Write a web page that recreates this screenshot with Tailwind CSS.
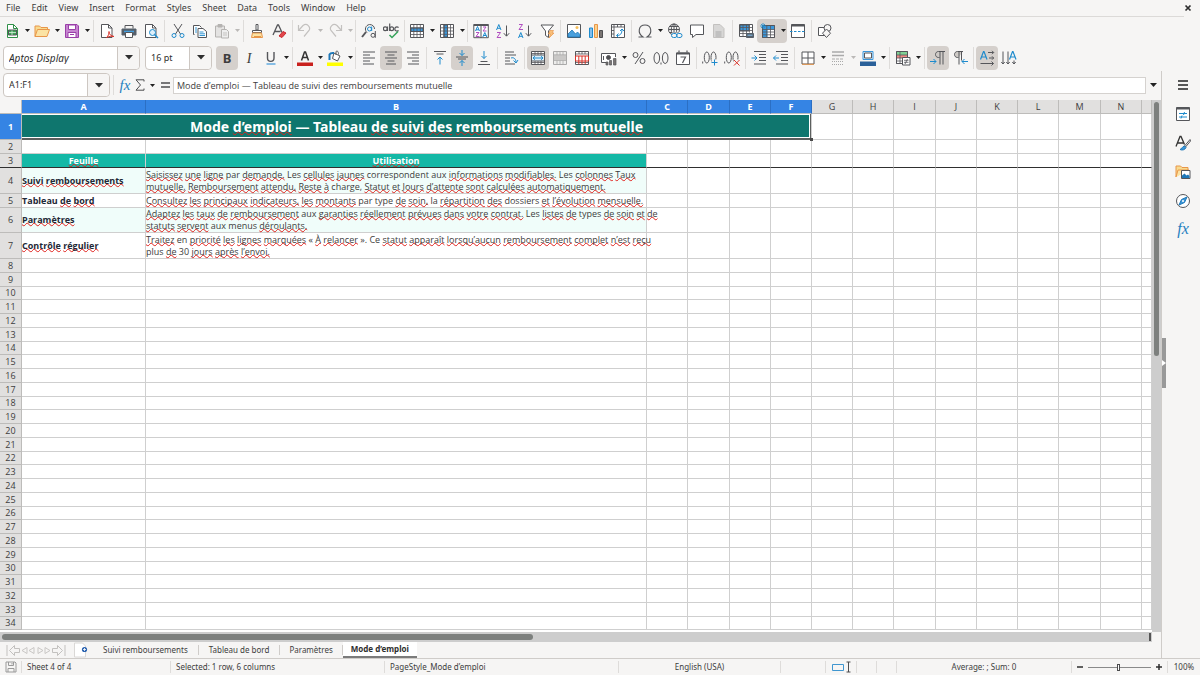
<!DOCTYPE html>
<html lang="fr">
<head>
    <meta charset="UTF-8">
    <meta name="viewport" content="width=device-width, initial-scale=1.0">
    <title>Tableau de suivi des remboursements mutuelle</title>
    <script src="https://cdn.jsdelivr.net/npm/@tailwindcss/browser@4"></script>
</head>
<body class="flex h-screen flex-col overflow-hidden bg-[#f6f5f4] font-['Noto_Sans',sans-serif] text-[9px] leading-3 text-[#3d3d3d]">

    <!-- Menu -->
    <header class="mr-4 flex h-[17px] shrink-0 items-center border-b border-[#dcdad8] pl-[6px]">
        <nav class="flex gap-[11px]">
            <a href="#">File</a>
            <a href="#">Edit</a>
            <a href="#">View</a>
            <a href="#">Insert</a>
            <a href="#">Format</a>
            <a href="#">Styles</a>
            <a href="#">Sheet</a>
            <a href="#">Data</a>
            <a href="#">Tools</a>
            <a href="#">Window</a>
            <a href="#">Help</a>
        </nav>
        <button aria-label="Close" class="-mr-2 ml-auto">
            <svg class="size-2" viewBox="0 0 8 8" fill="none" stroke="#2e2e2e" stroke-width="1.7"><path d="M1.5 1.5l5 5M6.5 1.5l-5 5"/></svg>
        </button>
    </header>

    <!-- Toolbars, filled by the script below -->
    <div id="standardBar" class="flex h-[27px] shrink-0 items-center pl-px"></div>
    <div class="flex h-[27px] shrink-0 items-center pl-[3px]">
        <div class="flex h-6 w-[137px] rounded border border-[#cdc7c2] bg-white">
            <input type="text" aria-label="Font name" value="Aptos Display" class="w-0 grow px-[5px] text-[10px] text-[#2e2e2e] italic outline-none">
            <button aria-label="Font list" class="flex w-[22px] items-center justify-center rounded-r border-l border-[#cdc7c2] bg-[#f6f5f4]">
                <svg class="h-[5px] w-2" viewBox="0 0 8 5" fill="#2e2e2e"><path d="M0 0h8L4 4.5z"/></svg>
            </button>
        </div>
        <div class="ml-[5px] flex h-6 w-[67px] rounded border border-[#cdc7c2] bg-white">
            <input type="text" aria-label="Font size" value="16 pt" class="w-0 grow px-[5px] text-[#2e2e2e] outline-none">
            <button aria-label="Size list" class="flex w-[22px] items-center justify-center rounded-r border-l border-[#cdc7c2] bg-[#f6f5f4]">
                <svg class="h-[5px] w-2" viewBox="0 0 8 5" fill="#2e2e2e"><path d="M0 0h8L4 4.5z"/></svg>
            </button>
        </div>
        <div id="formatBar" class="ml-1 flex items-center"></div>
    </div>

    <div class="flex min-h-0 grow">
        <main class="flex min-w-0 grow flex-col">
            <!-- Formula bar -->
            <div class="flex h-7 shrink-0 items-center pl-[3px]">
                <div class="flex h-6 w-[107px] rounded border border-[#cdc7c2] bg-white">
                    <input type="text" aria-label="Name box" value="A1:F1" class="w-0 grow px-[5px] text-[#2e2e2e] outline-none">
                    <button aria-label="Name list" class="flex w-[22px] items-center justify-center rounded-r border-l border-[#cdc7c2] bg-[#f6f5f4]">
                        <svg class="h-[5px] w-2" viewBox="0 0 8 5" fill="#2e2e2e"><path d="M0 0h8L4 4.5z"/></svg>
                    </button>
                </div>
                <div class="ml-[3px] flex h-5 items-center border-l border-[#dedcda] pl-1">
                    <button aria-label="Function wizard" class="w-[14px] font-['Liberation_Serif',serif] text-[15px] leading-4 text-[#1e7fc0] italic">fx</button>
                    <button aria-label="Select function" class="ml-[3px] flex items-center">
                        <svg class="h-3 w-[10px]" viewBox="0 0 10 12" fill="none" stroke="#4d4d4f"><path d="M9 2.5V.8H1L5.5 6 1 11.2h8V9.5"/></svg>
                        <svg class="ml-[5px] h-[3px] w-[5px]" viewBox="0 0 5 3" fill="#222"><path d="M0 0h5L2.5 3z"/></svg>
                    </button>
                    <button aria-label="Formula" class="ml-[6px]">
                        <svg class="h-2 w-[9px]" viewBox="0 0 9 8" stroke="#4d4d4f" stroke-width="1.5"><path d="M0 2h9M0 6h9"/></svg>
                    </button>
                </div>
                <input type="text" aria-label="Formula input" value="Mode d’emploi — Tableau de suivi des remboursements mutuelle" class="ml-[3px] h-[17px] min-w-0 grow border border-[#d5d2cf] bg-white px-[3px] font-['Open_Sans',sans-serif] outline-none">
                <button aria-label="Expand formula bar" class="flex w-[15px] justify-center">
                    <svg class="h-1 w-[7px]" viewBox="0 0 7 4" fill="#222"><path d="M0 0h7L3.5 4z"/></svg>
                </button>
            </div>

            <!-- Sheet -->
            <div class="flex min-h-0 grow pt-px">
                <div class="min-w-0 grow overflow-hidden bg-white">
                    <table class="w-full table-fixed border-separate border-spacing-0 font-['Open_Sans',sans-serif] [&_td]:border-r [&_td]:border-b [&_td]:border-[#cfcfcf] [&_td]:p-0 [&_td]:leading-[12px] [&_td]:whitespace-nowrap [&_th]:border-r [&_th]:border-b [&_th]:border-[#bdbcba] [&_th]:p-0 [&_th]:leading-[12px] [&_u]:decoration-[#e0201b] [&_u]:decoration-wavy [&_u]:decoration-1 [&_u]:[text-decoration-skip-ink:none] [&_u]:[text-underline-offset:-1px]">
                        <colgroup>
                            <col class="w-[22px]">
                            <col class="w-[124px]">
                            <col class="w-[501px]">
                            <col class="w-[41px]"><col class="w-[42px]"><col class="w-[41px]"><col class="w-[41px]">
                            <col class="w-[41px]"><col class="w-[41px]"><col class="w-[42px]"><col class="w-[41px]">
                            <col class="w-[41px]"><col class="w-[41px]"><col class="w-[42px]"><col class="w-[41px]">
                            <col>
                        </colgroup>
                        <thead>
                            <tr id="columnHeads" class="h-[14px]"></tr>
                        </thead>
                        <tbody id="sheetRows">
                            <tr class="h-[26px]">
                                <th class="bg-[#3584e4] font-bold text-white">1</th>
                                <td colspan="6" class="relative bg-[#0f766e] text-center font-['Noto_Sans',sans-serif] text-[14px] font-bold text-white">
                                    Mode <u>d’emploi</u> — Tableau <u>de</u> <u>suivi</u> <u>des</u> <u>remboursements</u> <u>mutuelle</u>
                                    <span class="absolute inset-0 -bottom-px border-r border-b-2 border-[#5c5f5e]">
                                        <span class="absolute inset-0 border border-l-0 border-white"></span>
                                    </span>
                                    <span class="absolute -right-[2px] -bottom-[2px] size-[3px] bg-[#4a4a4a]"></span>
                                </td>
                                <td></td><td></td><td></td><td></td><td></td><td></td><td></td><td></td><td></td>
                            </tr>
                            <tr class="h-[14px]" data-blank="15"></tr>
                            <tr class="h-[14px] [&>*]:border-b-[#2f2f2f]!" data-blank="13">
                                <td class="bg-[#14b8a6] text-center font-bold text-white"><u>Feuille</u></td>
                                <td class="bg-[#14b8a6] text-center font-bold text-white"><u>Utilisation</u></td>
                            </tr>
                            <tr class="h-[26px]" data-blank="13">
                                <td class="bg-[#f0fdfa] pl-px font-bold text-[#1f2937]"><u>Suivi</u> <u>remboursements</u></td>
                                <td class="bg-[#f0fdfa] pl-px"><u>Saisissez</u> <u>une</u> <u>ligne</u> par <u>demande.</u> Les <u>cellules</u> <u>jaunes</u> correspondent aux <u>informations</u> <u>modifiables.</u> Les <u>colonnes</u> <u>Taux</u><br><u>mutuelle,</u> <u>Remboursement</u> <u>attendu,</u> <u>Reste</u> <u>à</u> charge, <u>Statut</u> <u>et</u> <u>Jours</u> <u>d’attente</u> <u>sont</u> <u>calculées</u> <u>automatiquement.</u></td>
                            </tr>
                            <tr class="h-[14px]" data-blank="13">
                                <td class="pl-px font-bold text-[#1f2937]">Tableau <u>de</u> <u>bord</u></td>
                                <td class="pl-px"><u>Consultez</u> <u>les</u> <u>principaux</u> <u>indicateurs,</u> <u>les</u> <u>montants</u> par type <u>de</u> <u>soin,</u> la <u>répartition</u> <u>des</u> dossiers <u>et</u> <u>l’évolution</u> <u>mensuelle.</u></td>
                            </tr>
                            <tr class="h-[25px]" data-blank="13">
                                <td class="bg-[#f0fdfa] pl-px font-bold text-[#1f2937]"><u>Paramètres</u></td>
                                <td class="bg-[#f0fdfa] pl-px"><u>Adaptez</u> <u>les</u> <u>taux</u> <u>de</u> <u>remboursement</u> aux <u>garanties</u> <u>réellement</u> <u>prévues</u> <u>dans</u> <u>votre</u> <u>contrat.</u> Les <u>listes</u> <u>de</u> types <u>de</u> <u>soin</u> <u>et</u> <u>de</u><br><u>statuts</u> <u>servent</u> aux menus <u>déroulants.</u></td>
                            </tr>
                            <tr class="h-[26px]" data-blank="13">
                                <td class="pl-px font-bold text-[#1f2937]"><u>Contrôle</u> <u>régulier</u></td>
                                <td class="pl-px"><u>Traitez</u> en <u>priorité</u> <u>les</u> <u>lignes</u> <u>marquées</u> « <u>À</u> <u>relancer</u> ». Ce <u>statut</u> <u>apparaît</u> <u>lorsqu’aucun</u> <u>remboursement</u> <u>complet</u> <u>n’est</u> <u>reçu</u><br>plus <u>de</u> 30 <u>jours</u> <u>après</u> <u>l’envoi.</u></td>
                            </tr>
                        </tbody>
                    </table>
                </div>
                <div class="w-[9px] shrink-0 bg-[#cdcdcd] pt-[2px] pl-[2px]">
                    <div class="h-[254px] w-[5px] rounded-full bg-[#7d807e]"></div>
                </div>
            </div>
            <div class="mr-[9px] flex h-[10px] shrink-0 items-center bg-[#cdcdcd] pl-[2px]">
                <div class="h-[6px] w-[531px] rounded-full bg-[#7d807e]"></div>
                <div class="ml-auto h-2 w-[3px] border-r border-[#cdcdcd] bg-[#555]"></div>
            </div>

            <!-- Sheet tabs -->
            <div class="flex h-4 shrink-0 items-stretch pl-[6px] text-[8px]">
                <div class="flex items-center">
                    <button aria-label="First sheet"><svg class="h-[13px] w-[15px]" viewBox="0 0 15 13" fill="none" stroke="#c3c1bf"><path d="M1 1v11M3.5 6.5L8.5 1.5v3h5v4h-5v3z"/></svg></button>
                    <button aria-label="Previous sheet"><svg class="h-[13px] w-[15px]" viewBox="0 0 15 13" fill="none" stroke="#c9c7c5"><path d="M1 6.5l5-3v6zM8 6.5l5-3v6z"/></svg></button>
                    <button aria-label="Next sheet"><svg class="h-[13px] w-[15px]" viewBox="0 0 15 13" fill="none" stroke="#c9c7c5"><path d="M7 6.5l-5-3v6zM14 6.5l-5-3v6z"/></svg></button>
                    <button aria-label="Last sheet"><svg class="h-[13px] w-[15px]" viewBox="0 0 15 13" fill="none" stroke="#c3c1bf"><path d="M14 1v11M11.5 6.5L6.5 1.5v3h-5v4h5v3z"/></svg></button>
                </div>
                <button aria-label="Add sheet" class="ml-2">
                    <svg class="h-4 w-[14px]" viewBox="0 0 14 16"><path d="M.5 1h8l3 3v11H.5z" fill="#fff" stroke="#dad8d6"/><circle cx="10.5" cy="7.5" r="2.6" fill="#2a62b0"/><path d="M10.5 6v3M9 7.5h3" stroke="#fff" stroke-width=".8"/></svg>
                </button>
                <nav class="ml-[5px] flex items-center">
                    <a href="#" class="border-r border-[#cfccc9] px-[10px] leading-[10px]">Suivi remboursements</a>
                    <a href="#" class="border-r border-[#cfccc9] px-[10px] leading-[10px]">Tableau de bord</a>
                    <a href="#" class="border-r border-[#cfccc9] px-[9px] leading-[10px]">Paramètres</a>
                    <a href="#" class="h-full border-b-2 border-[#7b7b7b] bg-white px-2 leading-[14px] font-bold text-[#2e2e2e]">Mode d’emploi</a>
                </nav>
            </div>
        </main>

        <!-- Sidebar -->
        <div class="w-1 shrink-0 border-l border-[#cfccc9]">
            <button aria-label="Hide sidebar" class="mt-[267px] flex h-[50px] w-1 items-center bg-[#999]">
                <svg class="h-[6px] w-1" viewBox="0 0 4 6" fill="#fff"><path d="M0 0l4 3-4 3z"/></svg>
            </button>
        </div>
        <aside id="sideBar" class="flex w-[35px] shrink-0 flex-col items-center gap-[13px] pt-[6px]"></aside>
    </div>

    <!-- Status bar -->
    <footer class="grid h-[17px] shrink-0 grid-cols-[22px_149fr_214fr_234fr_162fr_45fr_31px_20px_20px_175fr_96px_32px] border-t border-[#cfccc9] py-[2px] text-[8px] [&>div]:flex [&>div]:items-center [&>div]:border-r [&>div]:border-[#dedcda] [&>div]:whitespace-nowrap">
        <div class="justify-center"><svg class="size-3" viewBox="0 0 12 12" fill="none" stroke="#9a9a9a"><path d="M1 1h9l1 1v9H1zM3.5 1v3.5h5V1M3 11V7.5h6V11M7 2v1.5"/></svg></div>
        <div class="pl-[5px]">Sheet 4 of 4</div>
        <div class="pl-[5px]">Selected: 1 row, 6 columns</div>
        <div class="pl-[5px]">PageStyle_Mode d’emploi</div>
        <div class="justify-center">English (USA)</div>
        <div></div>
        <div class="justify-center"><svg class="h-3 w-[19px]" viewBox="0 0 19 12" fill="none"><path d="M.5 3.5h11v6H.5z" stroke="#3f96d0"/><path d="M14.5 1h4M16.5 1v10M14.5 11h4" stroke="#4d4d4f"/></svg></div>
        <div></div>
        <div></div>
        <div class="justify-center">Average: ; Sum: 0</div>
        <div class="gap-1 px-1">
            <button aria-label="Zoom out"><svg class="size-2" viewBox="0 0 8 8" stroke="#2e2e2e" stroke-width="1.5"><path d="M1 4h6"/></svg></button>
            <input type="range" aria-label="Zoom" min="0" max="200" value="97" class="h-px w-0 grow appearance-none bg-[#8a8a8a] [&::-webkit-slider-thumb]:h-[7px] [&::-webkit-slider-thumb]:w-[3px] [&::-webkit-slider-thumb]:appearance-none [&::-webkit-slider-thumb]:border [&::-webkit-slider-thumb]:border-[#4d4d4f] [&::-webkit-slider-thumb]:bg-white">
            <button aria-label="Zoom in"><svg class="size-2" viewBox="0 0 8 8" stroke="#2e2e2e" stroke-width="1.5"><path d="M1 4h6M4 1v6"/></svg></button>
        </div>
        <div class="justify-center border-r-0!">100%</div>
    </footer>

    <script>
        // Icon bodies, 16x16
        const icons = {
            'New': '<path d="M3.5 1.5h6l4 4v9h-10z" fill="#fff" stroke="#309048"/><path d="M9.5 1.5v4h4" stroke="#309048"/><path d="M4.5 7h8v5h-8z" fill="#3fa458"/><path d="M5 9.5h7M8 7.5V12" stroke="#d7f0dc" stroke-width=".8"/>',
            'Open': '<path d="M1 13.5V3h4.500L7 4.500h6.500V7" fill="#f8db8f" stroke="#e8964a"/><path d="M1 13.5L3.5 6.5h12l-2.500 7z" fill="#fbe3a4" stroke="#e8964a"/>',
            'Save': '<path d="M1.5 1.5h11.500l1.500 1.500v11.500h-13z" fill="#c685d0" stroke="#9a3fa8"/><path d="M4.5 2h7v4.500h-7zM4 9.500h8v5H4z" fill="#fff" stroke="#9a3fa8"/><path d="M6 11.5h4" stroke="#9a3fa8"/>',
            'Export as PDF': '<path d="M2.5 1.5h7l3.500 3.500v9.500H2.500z" fill="#fff"/><path d="M9.5 1.5V5H13"/><path d="M7.5 14.5c2-1.500 2.500-4 2.500-6 0 3 2 4.500 5 5-3-.5-5-.2-7.500 1z" stroke="#d9342b"/>',
            'Print': '<path d="M4 5.5v-3h8v3"/><path d="M1 6h14v6H1z" fill="#56606b" stroke="#56606b"/><path d="M3 8.5h10" stroke="#46a0e0" stroke-width="1.5"/><path d="M4.5 9.5h7v5h-7z" fill="#fff"/>',
            'Print preview': '<path d="M2.5 1.5h7l3.500 3.500v9.500H2.500z" fill="#fff"/><path d="M9.5 1.5V5H13"/><circle cx="9.5" cy="9.5" r="3" fill="#dff0fb" stroke="#1e8bcd"/><path d="M11.5 11.5l3.500 3.500" stroke="#1e8bcd" stroke-width="1.5"/>',
            'Cut': '<path d="M4 1l6.500 10M12 1L5.500 11"/><circle cx="4" cy="12.5" r="2" stroke="#1e8bcd"/><circle cx="12" cy="12.5" r="2" stroke="#1e8bcd"/>',
            'Copy': '<path d="M2.5 11.5h-1v-9h6l2 2" fill="#fff"/><path d="M6 5.5h5l3.500 3v6H6z" fill="#fff"/><path d="M7.5 9h4M7.5 10.8h5.500M7.5 12.5h5.500M3 5h2M3 7h2M3 9h2" stroke="#1e8bcd" stroke-width=".9"/>',
            'Paste': '<path d="M1.5 3h9v11h-9z" fill="#e4e3e2" stroke="#b5b3b1"/><path d="M4 1.5h4v2.500H4z" fill="#b5b3b1" stroke="#b5b3b1"/><path d="M7.5 6.5h5l2 2v6.500h-7z" fill="#eee" stroke="#b5b3b1"/><path d="M9 10h4M9 12h4" stroke="#c5c3c1"/>',
            'Clone formatting': '<path d="M7 1.5h2V7H7zM3.5 7.5h9v2h-9z" fill="#fff"/><path d="M3.5 10h9l1 4.500H2.500z" fill="#fbe3a4" stroke="#e8964a"/><path d="M5 13.5h7" stroke="#e8964a"/>',
            'Clear formatting': '<path d="M2 12L6.5 2h1L11 9.500M4 8.500h5.500" stroke-width="1.3"/><path d="M8 13l4-4.500 3 1.500-4 4.500z" fill="#e2474b" stroke="#c9262e"/>',
            'Undo': '<path d="M1.5 2v5.500H7M2 7l4-4.500c4-3 8 1.500 6 5L7 13.500" stroke="#c3c1bf" stroke-width="1.2"/>',
            'Redo': '<path d="M14.5 2v5.500H9M14 7l-4-4.500c-4-3-8 1.500-6 5L9 13.500" stroke="#c3c1bf" stroke-width="1.2"/>',
            'Find and replace': '<path d="M5 9L1 14" stroke-width="2"/><path d="M6 9.5C3 7 4.500 2 8.500 1.500c3 0 5 2 5 4.500"/><circle cx="8.500" cy="6" r="2" stroke="#1e8bcd"/><path d="M10.7 3.500V8" stroke="#1e8bcd"/><circle cx="12" cy="12.3" r="2"/><path d="M14.3 8v6.800"/>',
            'Spelling': '<g stroke-width="1.2"><circle cx="2.3" cy="5.8" r="1.900"/><path d="M4.500 3.500v4.500M6.700 .5v7.500M15.600 4.500c-2-1.500-3.800 0-3.800 1.500s1.800 2.900 3.800 1.500"/><circle cx="8.700" cy="5.800" r="1.900"/></g><path d="M6.500 12l2.500 2.500 6-6" stroke="#35a35a" stroke-width="1.5"/>',
            'Row': '<path d="M1.5 1.5h13v13h-13z" fill="#fff"/><path d="M2 5h12v3.500H2z" fill="#3b97db"/><path d="M1.5 4.800h13M1.5 8.500h13M1.5 11.5h13M4.800 1.5v13M8 1.5v13M11.3 1.5v13" stroke-width=".8"/>',
            'Column': '<path d="M1.5 1.5h13v13h-13z" fill="#fff"/><path d="M5 2h3.500v12H5z" fill="#3b97db"/><path d="M1.5 4.800h13M1.5 8h13M1.5 11.3h13M4.800 1.5v13M8.500 1.5v13M11.5 1.5v13" stroke-width=".8"/>',
            'Sort': '<path d="M.8 1.5h14.500v13.200H.8z" fill="#fff"/><path d="M.8 2h14.500" stroke-width="2"/><path d="M8 2v13"/><path d="M2.500 8l2-4.500 2 4.500M3 6.800h3M9.800 14l2-4.500 2 4.500M10.3 12.5h3" stroke="#1e8bcd"/><path d="M3 9.500h3L3 13.500h3.500M10 4h3l-3 4h3.500" stroke="#b14fc0"/>',
            'Sort ascending': '<path d="M1.5 7l2.300-5.500L6 7M2.200 5.300h3.200" stroke="#1e8bcd"/><path d="M2 9.500h3.500L2 14.500h4" stroke="#b14fc0"/><path d="M11.5 2.500v10.500M8.800 10.200l2.700 3 2.700-3"/>',
            'Sort descending': '<path d="M1.5 15l2.300-5.500L6 15M2.200 13.300h3.200" stroke="#1e8bcd"/><path d="M2 1.5h3.500L2 6.500h4" stroke="#b14fc0"/><path d="M11.5 2.500v10.500M8.800 10.200l2.700 3 2.700-3"/>',
            'AutoFilter': '<path d="M2 2h12.500L9.500 8v6.500l-3-2V8z" fill="#fff"/><path d="M11 7.500h3.500L13 10h2l-5 5 1.500-4H9.500z" fill="#f9c07a" stroke="#e8964a" stroke-width=".7"/>',
            'Image': '<path d="M1.5 1.5h13v13h-13z" fill="#fff"/><path d="M2 14v-3l4-4 3.500 4L11.500 9l2.500 2.500V14z" fill="#4aa0dd" stroke="#1e78b8" stroke-width=".8"/><circle cx="11" cy="4.500" r="1.500" fill="#f8c15c" stroke="none"/>',
            'Chart': '<path d="M1.5 5h3v9.500h-3z" fill="#83beec" stroke="#1e8bcd"/><path d="M6.500 1.5h3v13h-3z" fill="#fbd28b" stroke="#e8964a"/><path d="M11.5 7.500h3v7h-3z" fill="#7a7573" stroke="#4d4d4f"/>',
            'Pivot table': '<path d="M1.5 1.5h13v13h-13z" fill="#fff"/><path d="M1.5 4h13M4 1.5v13M7.500 1.5v2.500M11 1.5v2.500M1.5 7.500h2.500M1.5 11h2.500" stroke-width=".9"/><path d="M7 12.500c3.500 0 5-2 5-6M10 8l2-2 2 2M8.500 10.500l-2 2 2 2" stroke="#1e8bcd"/>',
            'Special character': '<path d="M1.5 14h4.500c-6-4-4.500-12 2-12s8 8 2 12h4.500" stroke-width="1.1"/>',
            'Hyperlink': '<circle cx="7" cy="6.500" r="5.500"/><path d="M1.5 6.500h11M7 1v11M2.500 3.500h9M2.500 9.500h9"/><ellipse cx="7" cy="6.500" rx="2.700" ry="5.500"/><path d="M5 9.500h10v6H5z" fill="#f6f5f4" stroke="none"/><rect x="4.500" y="10.500" width="5.500" height="4" rx="2" stroke="#1e8bcd"/><rect x="9.500" y="10.500" width="5.500" height="4" rx="2" stroke="#1e8bcd"/>',
            'Comment': '<path d="M1.5 2h13v9.500H7L3.500 14.500v-3h-2z" fill="#fff"/>',
            'Headers and footers': '<path d="M2.500 1.5h6.500l4 4v9H2.500z" fill="#d8d7d6" stroke="#c3c1bf"/><path d="M4.500 9h6M4.500 11h6M4.500 13h6" stroke="#aaa"/>',
            'Print area': '<path d="M1.5 1.5h13v12h-13z" fill="#fff"/><path d="M2 2h9v6H2z" fill="#3b97db"/><path d="M1.5 4.500h13M1.5 7.500h13M1.5 10.5h8M5 1.5v12M8.500 1.5v12M11.5 1.5v8" stroke-width=".8"/><path d="M8.500 10.5h7v4h-7z" fill="#56606b" stroke="#56606b"/><path d="M9.500 12.2h5" stroke="#83beec"/>',
            'Freeze': '<path d="M2.500 2.500h12v12h-12z" fill="#fff"/><path d="M3 3h11.500v3.500h-7v8H3z" fill="#3b97db" stroke="none"/><path d="M2.500 6.500h12M2.500 9h12M2.500 11.8h12M6.800 2.500v12M10.5 2.500v12M2.500 2.500h12v12h-12z" stroke-width=".8"/><path d="M3 0v6M0 3h6M1 1l4 4M5 1L1 5" stroke="#1e8bcd" stroke-width=".8"/>',
            'Split': '<path d="M1.5 1.5h13v13h-13z" fill="#fff"/><path d="M1.5 2.500h13" stroke-width="2"/><path d="M0 8.500h16" stroke="#1e8bcd" stroke-dasharray="2.5 1.5"/>',
            'Shapes': '<path d="M1.5 4.500h7v8h-7z" fill="#fff"/><circle cx="10.5" cy="5" r="3.500" fill="#f6f5f4"/><path d="M9.500 6l4 4.200-4 4.300-4-4.300z" fill="#f6f5f4"/>',
            'Bold': '<text x="8" y="13" text-anchor="middle" font-size="13" font-weight="bold" fill="#3d3d3d" stroke="none">B</text>',
            'Italic': '<text x="8" y="13" text-anchor="middle" font-size="14" font-style="italic" font-family="Liberation Serif, serif" fill="#3d3d3d" stroke="none">I</text>',
            'Underline': '<path d="M4.500 2v6c0 4.500 6.500 4.500 6.500 0V2" stroke-width="1.4"/><path d="M3.500 14h9" stroke="#3b97db" stroke-width="1.2"/>',
            'Font color': '<path d="M0 12.5h16V16H0z" fill="#c9211e" stroke="none"/><path d="M4.500 10.5L7.500 2h1l3 8.500M5.500 7.500h5" stroke="#333" stroke-width="1.5"/>',
            'Highlighting': '<path d="M0 12.5h16V16H0z" fill="#ff0" stroke="none"/><path d="M7 3l6 3-2.500 5-5-2.500zM9 5V1.500c1.500-1 2.500 0 2.500 3" fill="#fff"/><path d="M2.500 10V4.500c1-2 3-1.500 4.500-1.500" stroke="#1e78b8" stroke-width="2"/>',
            'Align left': '<path d="M2 2h12M2 5h7M2 8h12M2 11h7M2 14h11"/>',
            'Center': '<path d="M2 2h12M4.500 5h7M2 8h12M4.500 11h7M3 14h10"/>',
            'Align right': '<path d="M2 2h12M7 5h7M2 8h12M7 11h7M3 14h11"/>',
            'Align top': '<path d="M2 1.5h12M4.500 4h7"/><path d="M8 14.5V7M5.500 9.500L8 7l2.500 2.500" stroke="#1e8bcd"/>',
            'Center vertically': '<path d="M2 7h12M4 9h8"/><path d="M8 0v5.500M5.500 3L8 5.500 10.5 3M8 16v-5.500M5.500 13L8 10.5l2.500 2.500" stroke="#1e8bcd"/>',
            'Align bottom': '<path d="M2 14.5h12M4.500 11.5h7"/><path d="M8 1v7.500M5.500 6L8 8.500 10.5 6" stroke="#1e8bcd"/>',
            'Wrap text': '<path d="M2 2h9M2 5h11M2 8h5M2 11h5M2 14h10"/><path d="M8 8c3-1 5 1 5 4.500M10.5 10.5l2.500 2.500 2-3" stroke="#1e8bcd"/>',
            'Merge and center': '<path d="M1.5 1.5h13v13h-13z" fill="#fff"/><path d="M1.5 5h13v6h-13z" fill="#dff0fb"/><path d="M1.5 3.500h13M1.5 12.5h13M5 1.5V5M8 1.5V5M11 1.5V5M5 11v3.500M8 11v3.500M11 11v3.500" stroke-width=".8"/><path d="M3 8h10M5 6.200L3 8l2 1.800M11 6.200L13 8l-2 1.800" stroke="#1e8bcd"/>',
            'Merge cells': '<path d="M1.5 1.5h13v13h-13z" fill="#ededec" stroke="#aaa"/><path d="M2 5h12v5H2z" fill="#c9c8c7" stroke="none"/><path d="M1.5 4.800h13M1.5 10.5h13M5 1.5v3.500M8 1.5v3.500M11 1.5v3.500M5 10.5v4M8 10.5v4M11 10.5v4" stroke="#aaa" stroke-width=".8"/>',
            'Split cells': '<path d="M1.5 1.5h13v13h-13z" fill="#fff"/><path d="M1.5 4h13M1.5 12.5h13M5 1.5V4M8 1.5V4M11 1.5V4" stroke-width=".8"/><path d="M1.5 6h13v5h-13zM4.800 6v8M8 6v8M11.2 6v8" stroke="#d9342b"/>',
            'Currency': '<path d="M14.5 7V3.500H.5v9h6" fill="#fff"/><circle cx="7.500" cy="7.500" r="2" fill="#4d4d4f"/><path d="M2.500 6v4"/><path d="M5 12h2v3H5zM8.500 10.5h2V15h-2zM12.5 8.500H15V15h-2.500z" fill="#7a7573" stroke-width=".7"/>',
            'Percent': '<circle cx="4.500" cy="5" r="2.500"/><circle cx="11.5" cy="11" r="2.500"/><path d="M12 2L4 14"/>',
            'Number': '<ellipse cx="3.800" cy="8" rx="2.800" ry="5.500"/><ellipse cx="12.2" cy="8" rx="2.800" ry="5.500"/><path d="M8 12.5v2"/>',
            'Date': '<path d="M1.5 3h13v11.500h-13z" fill="#fff"/><path d="M1.5 3.500h13" stroke-width="2"/><path d="M4 .5v2M12 .5v2M5.500 7h5L7.500 13" stroke-width="1.2"/>',
            'Add decimal place': '<path d="M.7 11.5v2"/><ellipse cx="4.800" cy="7.500" rx="2.500" ry="5.500"/><ellipse cx="11.5" cy="7.500" rx="2.500" ry="5.500"/><path d="M9.500 9.500h7v7h-7z" fill="#f6f5f4" stroke="none"/><path d="M12.5 9.500v6M9.500 12.5h6" stroke="#1e8bcd"/>',
            'Delete decimal place': '<path d="M.7 11.5v2"/><ellipse cx="4.800" cy="7.500" rx="2.500" ry="5.500"/><ellipse cx="11.5" cy="7.500" rx="2.500" ry="5.500"/><path d="M9.500 9.500h7v7h-7z" fill="#f6f5f4" stroke="none"/><path d="M10 10l5.500 5.500M15.500 10L10 15.5" stroke="#d9342b"/>',
            'Increase indent': '<path d="M3 1.5h12M8 4.500h7M8 7.500h7M8 10.5h7M3 14h12"/><path d="M.5 8H6M3.500 5.500L6 8l-2.500 2.500" stroke="#1e8bcd"/>',
            'Decrease indent': '<path d="M3 1.5h12M8 4.500h7M8 7.500h7M8 10.5h7M3 14h12"/><path d="M.5 8H6M3 5.500L.5 8 3 10.5" stroke="#1e8bcd"/>',
            'Borders': '<path d="M2 2h12v12H2z" fill="#fff"/><path d="M8 2v12M2 8h12"/><path d="M2 14.3h12" stroke="#e8964a"/>',
            'Border style': '<path d="M2 2h12M2 5.500h12" stroke="#aaa" stroke-width="1.5"/><path d="M2 9h12" stroke="#aaa" stroke-dasharray="3 1"/><path d="M2 11.5h12M2 14.5h12" stroke="#aaa" stroke-dasharray="1 1"/>',
            'Border color': '<path d="M3 1.5h10v8H3z" fill="#dff0fb" stroke="#3b97db"/><path d="M4.500 3h7v5h-7z" fill="#fff"/><path d="M0 11.5h16V16H0z" fill="#2a6099" stroke="none"/>',
            'Conditional': '<path d="M1.5 1.5h11v12h-11z" fill="#fff"/><path d="M2 2h10v3H2z" fill="#7fd094" stroke="none"/><path d="M2 5h10v3H2z" fill="#f08a85" stroke="none"/><path d="M1.5 5h11M1.5 8h11M1.5 11h11M5 1.5v12M1.5 1.5h11v12h-11z" stroke-width=".8"/><path d="M7.500 7.500h7.500V15H7.500z" fill="#fff"/><path d="M9 10.3h4.500M9 12.3h4.500M12.5 9L10 14" stroke-width=".8"/>',
            'Left-to-right': '<path d="M15 1.5H8.500c-4 0-4 6 0 6h1" fill="#cfcbc7"/><path d="M10 1.5v13M13 1.5v13"/><path d="M0 11.5h6M3.500 9L6 11.5 3.500 14" stroke="#1e8bcd"/>',
            'Right-to-left': '<path d="M11 1.5H5.500c-4 0-4 6 0 6h1" fill="#cfcbc7"/><path d="M7 1.5v13M9.500 1.5v9"/><path d="M16 11.5h-6M12.5 9L10 11.5l2.500 2.500" stroke="#1e8bcd"/>',
            'Text direction from left': '<path d="M1.5 9.500L4.500 1.5h.5l3 8M2.500 7h5" stroke="#1e8bcd" stroke-width="1.2"/><path d="M9 2.500h5.500M13 .8l1.700 1.700L13 4.200M10 8h4.500M13 6.300L14.7 8 13 9.700M1.5 13.5h13M12.5 11.5l2 2-2 2"/>',
            'Text direction from top': '<path d="M8.500 9.500L11.5 1.5h.5l3 8M9.500 7h5" stroke="#1e8bcd" stroke-width="1.2"/><path d="M2 1.5v12.500M.3 12L2 14l1.700-2M7 1.5v12.500M5.300 12L7 14l1.700-2M13 10.5V14M11.3 12l1.700 2 1.700-2"/>',
            'Sidebar settings': '<path d="M3 4h10M3 8h10M3 12h10" stroke="#222" stroke-width="1.5"/>',
            'Properties': '<path d="M1.5 1.5h13v13h-13z" fill="#fff"/><path d="M1.5 2.500h13" stroke-width="2"/><path d="M4 7.500h8M4 11h8M9.500 6L8.500 9M7 9.500L6 12.5" stroke="#1e8bcd"/>',
            'Styles': '<path d="M1 11.5L5 1.5h1l3.500 8M2.500 8h6" stroke="#333" stroke-width="1.3"/><path d="M15 4.500L9.500 11l1 1L15.5 6z" fill="#fff"/><path d="M5 14.5c2-.5 2-3 4.500-3.500l1.500 1.500c-1 2.500-4 3-6 2z" fill="#3b97db" stroke="#1e78b8"/>',
            'Gallery': '<path d="M1 13V2h4.500L7 3.500h6V6" fill="#f8db8f" stroke="#e8964a"/><path d="M1 13L3 6h11" fill="#fbe3a4" stroke="#e8964a"/><path d="M6.500 6.500h8.500v8H6.500z" fill="#fff"/><path d="M7 14v-2.500l2.500-2 2 2 1.500-1 1.500 1.500v2z" fill="#1e78b8" stroke="none"/>',
            'Navigator': '<circle cx="8" cy="8" r="6.500" fill="#fff"/><path d="M12 4L9.500 9.500 4 12l2.500-5.500z" fill="#3b97db" stroke="#1e78b8"/><circle cx="8" cy="8" r="1" fill="#fff" stroke="none"/>',
            'Functions': '<text x="8" y="12" text-anchor="middle" font-size="16" font-style="italic" font-family="Liberation Serif, serif" fill="#1e7fc0" stroke="none">fx</text>',
        };

        function icon(name) {
            return `<svg class="size-4 shrink-0" viewBox="0 0 16 16" fill="none" stroke="#55565a">${icons[name]}</svg>`;
        }

        // v = drop-down arrow, v- = disabled arrow, * = pressed
        function toolbar(id, groups) {
            document.getElementById(id).innerHTML = groups.map((group, i) => {
                const items = group.map(item => {
                    if (item === 'v' || item === 'v-' || item === 'v*') {
                        const fill = item === 'v-' ? '#bbb9b7' : '#222';
                        const pressed = item === 'v*' ? 'rounded-r bg-[#d5d0cc]' : '';
                        return `<button aria-label="More" class="flex h-6 w-2 items-center justify-center ${pressed}"><svg class="h-[3px] w-[5px]" viewBox="0 0 5 3" fill="${fill}"><path d="M0 0h5L2.5 3z"/></svg></button>`;
                    }
                    const name = item.replace('*', '');
                    const pressed = item.endsWith('*') ? (name === 'Freeze' ? 'rounded-l bg-[#d5d0cc]' : 'rounded bg-[#d5d0cc]') : '';
                    return `<button aria-label="${name}" class="flex h-6 w-[22px] items-center justify-center ${pressed}">${icon(name)}</button>`;
                }).join('');
                // groups with two drop-downs sit a little tighter
                const tight = group.length === 4 && group[1].startsWith('v') && group[3].startsWith('v');
                const edge = i === 0 ? 'pr-[2px]' : tight ? 'border-l border-[#dedcda] px-px' : 'border-l border-[#dedcda] px-[2px]';
                return `<div class="flex h-[22px] items-center ${edge}">${items}</div>`;
            }).join('');
        }

        toolbar('standardBar', [
            ['New', 'v', 'Open', 'v', 'Save', 'v'],
            ['Export as PDF', 'Print', 'Print preview'],
            ['Cut', 'Copy', 'Paste', 'v-'],
            ['Clone formatting', 'Clear formatting'],
            ['Undo', 'v-', 'Redo', 'v-'],
            ['Find and replace', 'Spelling'],
            ['Row', 'v', 'Column', 'v'],
            ['Sort', 'Sort ascending', 'Sort descending', 'AutoFilter'],
            ['Image', 'Chart', 'Pivot table'],
            ['Special character', 'v', 'Hyperlink', 'Comment', 'Headers and footers'],
            ['Print area', 'Freeze*', 'v*', 'Split'],
            ['Shapes'],
        ]);

        toolbar('formatBar', [
            ['Bold*', 'Italic', 'Underline', 'v'],
            ['Font color', 'v', 'Highlighting', 'v'],
            ['Align left', 'Center*', 'Align right'],
            ['Align top', 'Center vertically*', 'Align bottom'],
            ['Wrap text'],
            ['Merge and center*', 'Merge cells', 'Split cells'],
            ['Currency', 'v', 'Percent', 'Number', 'Date'],
            ['Add decimal place', 'Delete decimal place'],
            ['Increase indent', 'Decrease indent'],
            ['Borders', 'v', 'Border style', 'v-', 'Border color', 'v'],
            ['Conditional', 'v'],
            ['Left-to-right*', 'Right-to-left'],
            ['Text direction from left*', 'Text direction from top'],
        ]);

        document.getElementById('sideBar').innerHTML =
            ['Sidebar settings', 'Properties', 'Styles', 'Gallery', 'Navigator', 'Functions']
                .map(name => `<button aria-label="${name}">${icon(name)}</button>`).join('');

        // Column headers, A to F selected
        document.getElementById('columnHeads').innerHTML = '<th class="bg-[#f6f5f4]"></th>' +
            [...'ABCDEFGHIJKLMN', ''].map((letter, i) => i < 6
                ? `<th class="border-r-[#2b6fc4]! bg-[#3584e4] font-bold text-white">${letter}</th>`
                : `<th class="bg-[#e1e0df] font-normal">${letter}</th>`).join('');

        // Row numbers and blank cells
        const body = document.getElementById('sheetRows');
        for (let n = 8; n <= 34; n++) {
            const row = document.createElement('tr');
            row.className = n % 4 === 2 ? 'h-[13px]' : 'h-[14px]';
            row.dataset.blank = 15;
            body.appendChild(row);
        }
        body.querySelectorAll('tr[data-blank]').forEach((row, i) => {
            row.insertAdjacentHTML('afterbegin', `<th class="bg-[#e1e0df] font-normal">${i + 2}</th>`);
            row.insertAdjacentHTML('beforeend', '<td></td>'.repeat(row.dataset.blank));
        });
    </script>
</body>
</html>
